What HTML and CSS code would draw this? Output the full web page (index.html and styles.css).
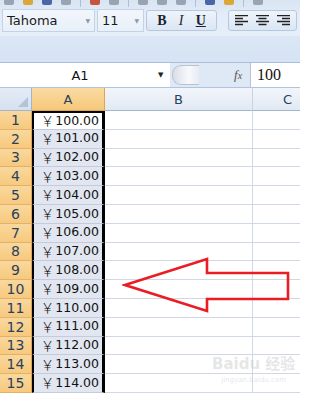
FILE: index.html
```html
<!DOCTYPE html>
<html lang="zh">
<head>
<meta charset="UTF-8">
<meta name="viewport" content="width=device-width, initial-scale=1.0">
<title>Excel</title>
<link rel="stylesheet" href="styles.css">
</head>
<body>

<div class="app">
    <!-- Cinta de opciones -->
    <div class="ribbon">
        <div class="ribbon-top">
            <span class="ico gray" style="margin-left:4px"></span>
            <span class="ico yellow"></span>
            <span class="ico blue"></span>
            <span class="ico gray"></span>
            <span class="sep"></span>
            <span class="ico red"></span>
            <span class="ico gray"></span>
            <span class="sep"></span>
            <span class="ico gray"></span>
            <span class="ico gray"></span>
            <span class="ico gray"></span>
            <span class="sep"></span>
            <span class="ico blue"></span>
            <span class="ico yellow"></span>
            <span class="sep"></span>
            <span class="ico gray"></span>
        </div>
        <div class="ribbon-row">
            <div class="combo font-name">
                <span>Tahoma</span>
                <span class="arrow">▼</span>
            </div>
            <div class="combo font-size">
                <span>11</span>
                <span class="arrow">▼</span>
            </div>
            <div class="btn-group biu">
                <span class="b">B</span>
                <span class="i">I</span>
                <span class="u">U</span>
            </div>
            <div class="btn-group align">
                <svg width="13" height="11" viewBox="0 0 13 11"><path d="M0 .5h13M0 3.5h8M0 6.5h13M0 9.5h8" stroke="#222" stroke-width="1.4"/></svg>
                <svg width="13" height="11" viewBox="0 0 13 11"><path d="M0 .5h13M2.5 3.5h8M0 6.5h13M2.5 9.5h8" stroke="#222" stroke-width="1.4"/></svg>
                <svg width="13" height="11" viewBox="0 0 13 11"><path d="M0 .5h13M5 3.5h8M0 6.5h13M5 9.5h8" stroke="#222" stroke-width="1.4"/></svg>
            </div>
        </div>
    </div>
    <div class="band"></div>

    <!-- Barra de fórmulas -->
    <div class="formula-bar">
        <div class="name-box">
            <span class="name">A1</span>
            <span class="name-arrow">▼</span>
        </div>
        <div class="splitter"><span class="knob"></span></div>
        <div class="fx">f<small>x</small></div>
        <div class="formula">100</div>
    </div>

    <!-- Hoja -->
    <div class="sheet" id="sheet">
        <div class="corner"><span class="tri"></span></div>
        <div class="col-head sel">A</div>
        <div class="col-head">B</div>
        <div class="col-head">C</div>
    </div>

    <svg class="arrow-note" width="170" height="56" viewBox="0 0 170 56">
        <polygon points="3,28 85,2 85,16 166,16 166,42 85,42 85,54" fill="none" stroke="#ea1c24" stroke-width="2.6" stroke-linejoin="miter"/>
    </svg>

    <div class="watermark">
        <div class="wm-logo">Baidu 经验</div>
        <div class="wm-url">jingyan.baidu.com</div>
    </div>
</div>

<script>
// Construir las filas de la hoja
let sheet = document.getElementById("sheet");
for (let i = 1; i <= 15; i++) {
    let html = `<div class="row-head">${i}</div>`;
    html += `<div class="cell a${i === 1 ? " active" : ""}"><span class="yen">￥</span>${(99 + i).toFixed(2)}</div>`;
    html += `<div class="cell"></div><div class="cell"></div>`;
    sheet.innerHTML += html;
}
</script>

</body>
</html>
```

FILE: styles.css
```css
/* Estilos */
body {
    margin: 0;
    background-color: #fff;
    font-family: "DejaVu Sans", Tahoma, sans-serif;
}

.app {
    position: relative;
    width: 300px;
    height: 394px;
    overflow: hidden;
    background-color: #fff;
}

/* Cinta */
.ribbon {
    height: 36px;
    background: linear-gradient(#d9e4f2, #e3ecf8 40%, #e6eef9);
}

.ribbon-top {
    height: 7px;
    display: flex;
    align-items: flex-start;
    gap: 9px;
    overflow: hidden;
}

.ico {
    width: 10px;
    height: 5px;
    border-radius: 0 0 2px 2px;
}

.ico.gray { background-color: #98a4b4; }
.ico.yellow { background-color: #d9a838; }
.ico.blue { background-color: #4a66a8; }
.ico.red { background-color: #c6533e; }

.sep {
    width: 1px;
    height: 7px;
    background-color: #aebfd6;
}

.ribbon-row {
    display: flex;
    align-items: flex-start;
    padding-top: 2px;
}

.combo {
    height: 23px;
    display: flex;
    align-items: center;
    justify-content: space-between;
    padding: 0 4px;
    border: 1px solid #c3d3e7;
    background: linear-gradient(#f2f6fc, #e9f0f9);
    font-size: 13px;
    color: #1b1b1b;
    box-sizing: border-box;
}

.font-name {
    width: 93px;
    margin-left: 2px;
}

.font-size {
    width: 47px;
    margin-left: 2px;
}

.arrow {
    font-size: 6px;
    color: #8c98a8;
}

.btn-group {
    height: 21px;
    margin-top: 1px;
    display: flex;
    align-items: center;
    border: 1px solid #b6c8df;
    border-radius: 3px;
    background: linear-gradient(#eef4fb, #dbe6f4);
    box-sizing: border-box;
}

.biu {
    width: 71px;
    margin-left: 2px;
    justify-content: space-around;
    padding: 0 4px;
    font-family: "Liberation Serif", serif;
    font-weight: bold;
    font-size: 14px;
    color: #1e1e2e;
}

.biu .i {
    font-style: italic;
    font-weight: normal;
}

.biu .u {
    text-decoration: underline;
}

.align {
    width: 69px;
    margin-left: 11px;
    justify-content: space-around;
    padding: 0 2px;
}

.band {
    height: 26px;
    background: linear-gradient(#dbe7f6, #d5e3f4);
    border-bottom: 1px solid #a9bfd9;
}

/* Barra de fórmulas */
.formula-bar {
    height: 24px;
    display: flex;
    align-items: stretch;
    background-color: #dfe8f5;
    border-bottom: 1px solid #b0c4de;
}

.name-box {
    width: 170px;
    display: flex;
    align-items: center;
    background-color: #fff;
    font-size: 13px;
    color: #111;
}

.name {
    flex: 1;
    text-align: center;
    padding-left: 2px;
}

.name-arrow {
    font-size: 7px;
    color: #222;
    width: 12px;
}

.splitter {
    width: 82px;
    display: flex;
    align-items: center;
}

.knob {
    width: 26px;
    height: 18px;
    border-radius: 9px 0 0 9px;
    background: linear-gradient(90deg, #d8dee6, #f7f9fc 60%, #e6ecf3);
    border: 1px solid #b7c3d2;
    border-right: none;
    margin-left: 2px;
}

.fx {
    position: relative;
    margin-left: -18px;
    width: 16px;
    display: flex;
    align-items: center;
    font-family: "Liberation Serif", serif;
    font-style: italic;
    font-size: 13px;
    color: #555;
    border-right: 1px solid #b5c5da;
}

.fx small {
    font-size: 10px;
}

.formula {
    flex: 1;
    display: flex;
    align-items: center;
    padding-left: 6px;
    background-color: #fff;
    font-family: "Liberation Serif", serif;
    font-size: 16px;
    color: #111;
}

/* Hoja */
.sheet {
    display: grid;
    grid-template-columns: 32px 73px 148px 70px;
    grid-template-rows: 23px repeat(15, 18.8px);
}

.corner {
    position: relative;
    background: linear-gradient(#e4ebf6, #d6e1ef);
    border-right: 1px solid #9eb6ce;
    border-bottom: 1px solid #9eb6ce;
}

.tri {
    position: absolute;
    right: 3px;
    bottom: 3px;
    width: 0;
    height: 0;
    border-left: 10px solid transparent;
    border-bottom: 10px solid #b4c4d8;
}

.col-head {
    display: flex;
    align-items: center;
    justify-content: center;
    background: linear-gradient(#f2f6fb, #e2e9f3);
    border-right: 1px solid #c5d3e4;
    border-bottom: 1px solid #9eb6ce;
    font-size: 13px;
    color: #27415f;
}

.col-head.sel {
    background: linear-gradient(#f9dba3, #f6c87a);
    border-right-color: #e1a44f;
    border-bottom-color: #e1a44f;
}

.row-head {
    display: flex;
    align-items: center;
    justify-content: center;
    background: linear-gradient(#f9d89d, #f7c97e);
    border-right: 1px solid #e1a44f;
    border-bottom: 1px solid #e3b26a;
    font-size: 14px;
    color: #27415f;
    box-sizing: border-box;
}

.cell {
    border-right: 1px solid #d0d7e5;
    border-bottom: 1px solid #d0d7e5;
    box-sizing: border-box;
}

.cell.a {
    display: flex;
    align-items: center;
    justify-content: flex-end;
    padding-right: 3px;
    background-color: #e1e6f0;
    border-left: 2px solid #000;
    border-right: 3px solid #000;
    border-bottom: 1px solid #c4ccdb;
    font-size: 12.5px;
    line-height: 1;
    color: #111;
}

.cell.active {
    background-color: #fff;
    border-top: 2px solid #000;
}

.yen {
    font-family: "Noto Sans CJK SC", sans-serif;
    font-size: 13.5px;
    font-weight: 300;
    line-height: 1;
    margin-right: 1px;
}

/* Flecha roja */
.arrow-note {
    position: absolute;
    left: 122px;
    top: 257px;
}

/* Marca de agua */
.watermark {
    position: absolute;
    left: 212px;
    top: 352px;
    white-space: nowrap;
    color: rgba(205, 205, 205, 0.5);
    font-family: "DejaVu Sans", "Noto Sans CJK SC", sans-serif;
    text-align: center;
}

.wm-logo {
    font-size: 15px;
    font-weight: bold;
}

.wm-url {
    font-size: 7px;
    margin-top: 3px;
}
```
